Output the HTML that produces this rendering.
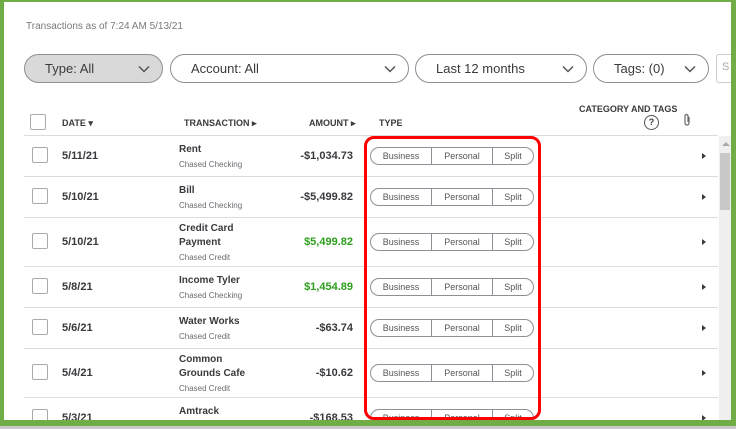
<!DOCTYPE html><html><head><style>
*{margin:0;padding:0;box-sizing:border-box}
body{width:736px;height:429px;overflow:hidden;background:#fff;font-family:"Liberation Sans",sans-serif;position:relative;color:#393a3d}
.a{position:absolute}
.pill{position:absolute;top:54px;height:29px;border:1px solid #8d9096;border-radius:15px;font-size:13px;line-height:27px;padding-left:20px;color:#393a3d}
.chev{position:absolute;right:12px;top:10px}
.hd{position:absolute;top:118px;font-size:9px;font-weight:bold;color:#393a3d}
.sep{position:absolute;left:24px;width:694px;height:1px;background:#dcdcdc}
.cb{position:absolute;left:32px;width:16px;height:16px;border:1px solid #aaa;border-radius:2px;background:#fff}
.dt{position:absolute;left:62px;font-size:11px;font-weight:bold}
.tn{position:absolute;left:179px;font-size:10px;font-weight:bold;line-height:14px}
.ac{position:absolute;left:179px;font-size:8px;color:#6b6c72}
.am{position:absolute;right:383px;font-size:11px;font-weight:bold}
.seg{position:absolute;left:370px;width:164px;height:18px;border:1px solid #8d9096;border-radius:9px;font-size:9px;color:#555;display:flex}
.seg span{line-height:16px;text-align:center}
.arr{position:absolute;left:702px;width:0;height:0;border-left:4px solid #393a3d;border-top:3px solid transparent;border-bottom:3px solid transparent}
</style></head><body>
<div class="a" style="left:26px;top:21px;font-size:10px;color:#7a7a7a">Transactions as of 7:24 AM 5/13/21</div>
<div class="pill" style="left:24px;width:139px;background:#d9d9d9">Type: All<svg class="chev" width="12" height="8" viewBox="0 0 12 8"><path d="M1 1.5L6 6.5L11 1.5" fill="none" stroke="#555" stroke-width="1.5"/></svg></div>
<div class="pill" style="left:170px;width:239px">Account: All<svg class="chev" width="12" height="8" viewBox="0 0 12 8"><path d="M1 1.5L6 6.5L11 1.5" fill="none" stroke="#555" stroke-width="1.5"/></svg></div>
<div class="pill" style="left:415px;width:172px">Last 12 months<svg class="chev" width="12" height="8" viewBox="0 0 12 8"><path d="M1 1.5L6 6.5L11 1.5" fill="none" stroke="#555" stroke-width="1.5"/></svg></div>
<div class="pill" style="left:593px;width:116px">Tags: (0)<svg class="chev" width="12" height="8" viewBox="0 0 12 8"><path d="M1 1.5L6 6.5L11 1.5" fill="none" stroke="#555" stroke-width="1.5"/></svg></div>
<div class="a" style="left:716px;top:54px;width:20px;height:29px;border:1px solid #ccc;border-radius:3px;font-size:11px;color:#aaa;padding:6px 0 0 5px">S</div>

<div class="cb" style="left:30px;top:114px"></div>
<div class="hd" style="left:62px">DATE ▾</div>
<div class="hd" style="left:184px">TRANSACTION ▸</div>
<div class="hd" style="left:309px">AMOUNT ▸</div>
<div class="hd" style="left:379px">TYPE</div>
<div class="hd" style="left:579px;top:104px">CATEGORY AND TAGS</div>
<div class="a" style="left:644px;top:115px;width:15px;height:15px;border:1.2px solid #555;border-radius:50%;font-size:9px;font-weight:bold;text-align:center;line-height:13px">?</div>
<svg class="a" style="left:683px;top:113px" width="9" height="14" viewBox="0 0 9 14"><path d="M6 4V10a2 2 0 0 1-4 0V3a1.5 1.5 0 0 1 3 0V9" fill="none" stroke="#666" stroke-width="1.2"/></svg>
<div class="sep" style="top:135px"></div>

<div class="cb" style="top:147px"></div><div class="dt" style="top:150px">5/11/21</div><div class="tn" style="top:143px">Rent</div><div class="ac" style="top:160px">Chased Checking</div><div class="am" style="top:150px">-$1,034.73</div>
<div class="sep" style="top:176px"></div>
<div class="cb" style="top:188px"></div><div class="dt" style="top:191px">5/10/21</div><div class="tn" style="top:184px">Bill</div><div class="ac" style="top:201px">Chased Checking</div><div class="am" style="top:191px">-$5,499.82</div>
<div class="sep" style="top:217px"></div>
<div class="cb" style="top:233px"></div><div class="dt" style="top:236px">5/10/21</div><div class="tn" style="top:222px">Credit Card<br>Payment</div><div class="ac" style="top:253px">Chased Credit</div><div class="am" style="top:236px;color:#2ca01c">$5,499.82</div>
<div class="sep" style="top:266px"></div>
<div class="cb" style="top:278px"></div><div class="dt" style="top:281px">5/8/21</div><div class="tn" style="top:274px">Income Tyler</div><div class="ac" style="top:291px">Chased Checking</div><div class="am" style="top:281px;color:#2ca01c">$1,454.89</div>
<div class="sep" style="top:307px"></div>
<div class="cb" style="top:319px"></div><div class="dt" style="top:322px">5/6/21</div><div class="tn" style="top:315px">Water Works</div><div class="ac" style="top:332px">Chased Credit</div><div class="am" style="top:322px">-$63.74</div>
<div class="sep" style="top:348px"></div>
<div class="cb" style="top:364px"></div><div class="dt" style="top:367px">5/4/21</div><div class="tn" style="top:353px">Common<br>Grounds Cafe</div><div class="ac" style="top:384px">Chased Credit</div><div class="am" style="top:367px">-$10.62</div>
<div class="sep" style="top:397px"></div>
<div class="cb" style="top:409px"></div><div class="dt" style="top:412px">5/3/21</div><div class="tn" style="top:405px">Amtrack</div><div class="am" style="top:412px">-$168.53</div>

<div class="seg" style="top:147px"><span style="width:61px;border-right:1px solid #8d9096">Business</span><span style="width:61px;border-right:1px solid #8d9096">Personal</span><span style="width:40px">Split</span></div>
<div class="seg" style="top:188px"><span style="width:61px;border-right:1px solid #8d9096">Business</span><span style="width:61px;border-right:1px solid #8d9096">Personal</span><span style="width:40px">Split</span></div>
<div class="seg" style="top:233px"><span style="width:61px;border-right:1px solid #8d9096">Business</span><span style="width:61px;border-right:1px solid #8d9096">Personal</span><span style="width:40px">Split</span></div>
<div class="seg" style="top:278px"><span style="width:61px;border-right:1px solid #8d9096">Business</span><span style="width:61px;border-right:1px solid #8d9096">Personal</span><span style="width:40px">Split</span></div>
<div class="seg" style="top:319px"><span style="width:61px;border-right:1px solid #8d9096">Business</span><span style="width:61px;border-right:1px solid #8d9096">Personal</span><span style="width:40px">Split</span></div>
<div class="seg" style="top:364px"><span style="width:61px;border-right:1px solid #8d9096">Business</span><span style="width:61px;border-right:1px solid #8d9096">Personal</span><span style="width:40px">Split</span></div>
<div class="seg" style="top:409px"><span style="width:61px;border-right:1px solid #8d9096">Business</span><span style="width:61px;border-right:1px solid #8d9096">Personal</span><span style="width:40px">Split</span></div>

<div class="arr" style="top:153px"></div><div class="arr" style="top:194px"></div><div class="arr" style="top:239px"></div><div class="arr" style="top:284px"></div><div class="arr" style="top:325px"></div><div class="arr" style="top:370px"></div><div class="arr" style="top:415px"></div>

<div class="a" style="left:364px;top:136px;width:177px;height:284px;border:3px solid #f00;border-radius:10px"></div>

<div class="a" style="left:719px;top:136px;width:12px;height:284px;background:#efefef"></div>
<div class="a" style="left:722px;top:142px;width:0;height:0;border-left:4px solid transparent;border-right:4px solid transparent;border-bottom:4px solid #aaa"></div>
<div class="a" style="left:720px;top:153px;width:10px;height:57px;background:#c8c8c8"></div>

<div class="a" style="left:0;top:0;width:736px;height:2px;background:#70ad47"></div>
<div class="a" style="left:0;top:0;width:4px;height:426px;background:#70ad47"></div>
<div class="a" style="left:731px;top:0;width:5px;height:426px;background:#70ad47"></div>
<div class="a" style="left:0;top:420px;width:736px;height:6px;background:#70ad47"></div>
<div class="a" style="left:0;top:426px;width:736px;height:3px;background:#c8c8c8"></div>
</body></html>
